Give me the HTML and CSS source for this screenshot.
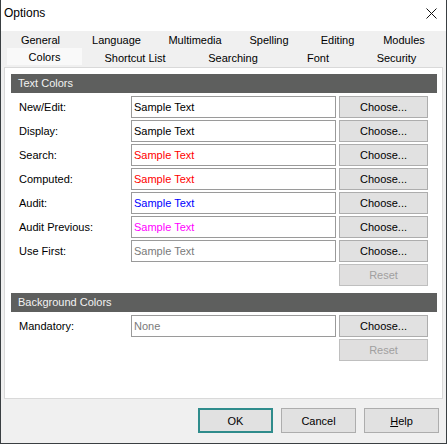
FILE: index.html
```html
<!DOCTYPE html>
<html>
<head>
<meta charset="utf-8">
<link rel="stylesheet" href="styles.css">
</head>
<body>
<div class="window">
  <div class="titlebar">
    <span class="title">Options</span>
    <svg class="close" width="11" height="11" viewBox="0 0 11 11"><path d="M0.5 0.5 L10.5 10.5 M10.5 0.5 L0.5 10.5" stroke="#111" stroke-width="1" fill="none"/></svg>
  </div>
  <div class="tabs">
    <div class="tabrow">
      <div class="tab t-general">General</div>
      <div class="tab t-language">Language</div>
      <div class="tab t-multimedia">Multimedia</div>
      <div class="tab t-spelling">Spelling</div>
      <div class="tab t-editing">Editing</div>
      <div class="tab t-modules">Modules</div>
    </div>
    <div class="tabrow">
      <div class="tab t-colors sel">Colors</div>
      <div class="tab t-shortcut">Shortcut List</div>
      <div class="tab t-searching">Searching</div>
      <div class="tab t-font">Font</div>
      <div class="tab t-security">Security</div>
    </div>
  </div>
  <div class="panel">
    <div class="section-head">Text Colors</div>
    <div class="rows">
      <div class="row"><span class="label">New/Edit:</span><div class="field c-black">Sample Text</div><button class="btn">Choose...</button></div>
      <div class="row"><span class="label">Display:</span><div class="field c-black">Sample Text</div><button class="btn">Choose...</button></div>
      <div class="row"><span class="label">Search:</span><div class="field c-red">Sample Text</div><button class="btn">Choose...</button></div>
      <div class="row"><span class="label">Computed:</span><div class="field c-red">Sample Text</div><button class="btn">Choose...</button></div>
      <div class="row"><span class="label">Audit:</span><div class="field c-blue">Sample Text</div><button class="btn">Choose...</button></div>
      <div class="row"><span class="label">Audit Previous:</span><div class="field c-magenta">Sample Text</div><button class="btn">Choose...</button></div>
      <div class="row"><span class="label">Use First:</span><div class="field c-gray">Sample Text</div><button class="btn">Choose...</button></div>
      <div class="row"><span class="label"></span><div class="spacer"></div><button class="btn disabled">Reset</button></div>
    </div>
    <div class="section-head second">Background Colors</div>
    <div class="rows">
      <div class="row"><span class="label">Mandatory:</span><div class="field c-gray">None</div><button class="btn">Choose...</button></div>
      <div class="row"><span class="label"></span><div class="spacer"></div><button class="btn disabled">Reset</button></div>
    </div>
  </div>
  <div class="footer">
    <button class="dbtn default">OK</button>
    <button class="dbtn">Cancel</button>
    <button class="dbtn"><u>H</u>elp</button>
  </div>
</div>
</body>
</html>
```

FILE: styles.css
```css
html, body {
  margin: 0;
  padding: 0;
  background: #f0f0f0;
}
body {
  font-family: "Liberation Sans", Arial, sans-serif;
  font-size: 11px;
  color: #000;
}
.window {
  width: 445px;
  height: 443px;
  border-left: 1px solid #3a3f42;
  border-right: 1px solid #3a3f42;
  border-bottom: 1px solid #3a3f42;
  background: #f0f0f0;
  display: flex;
  flex-direction: column;
}
.titlebar {
  height: 31px;
  background: #fff;
  display: flex;
  justify-content: space-between;
  align-items: flex-start;
  padding: 0 9px 0 3px;
}
.title {
  font-size: 12px;
  line-height: 14px;
  padding-top: 6px;
  color: #000;
}
.close {
  margin-top: 8px;
}
.tabs {
  padding-left: 3px;
}
.tabrow {
  display: flex;
  height: 18px;
  align-items: flex-start;
}
.tab {
  height: 18px;
  line-height: 18px;
  text-align: center;
  white-space: nowrap;
}
.t-general { width: 73px; }
.t-language { width: 79px; }
.t-multimedia { width: 78px; }
.t-spelling { width: 70px; }
.t-editing { width: 67px; }
.t-modules { width: 66px; }
.t-colors { width: 75px; margin-left: 3px; margin-right: 2px; }
.t-shortcut { width: 102px; }
.t-searching { width: 94px; }
.t-font { width: 76px; }
.t-security { width: 81px; }
.tab.sel {
  background: #f9f9f9;
  margin-top: -1px;
  height: 17px;
}
.panel {
  margin-left: 3px;
  width: 437px;
  height: 330px;
  border: 1px solid #d9d9d9;
  background: #fff;
  padding: 6px 5px 0 6px;
  box-sizing: content-box;
}
.panel {
  width: 426px;
  height: 324px;
}
.section-head {
  height: 19px;
  line-height: 19px;
  background: #5e5f5e;
  color: #f2f2f2;
  padding-left: 7px;
}
.section-head.second {
  margin-top: 7px;
}
.rows {
  padding-left: 8px;
  padding-top: 3px;
  display: flex;
  flex-direction: column;
  gap: 2px;
}
.row {
  display: flex;
  align-items: center;
  height: 22px;
}
.label {
  width: 112px;
  flex: none;
}
.field {
  width: 203px;
  height: 20px;
  line-height: 20px;
  border: 1px solid #9a9a9a;
  padding-left: 2px;
  box-sizing: border-box;
  width: 205px;
  height: 22px;
  background: #fff;
  flex: none;
}
.spacer {
  width: 205px;
  flex: none;
}
.c-black { color: #000; }
.c-red { color: #ff0000; }
.c-blue { color: #0000ff; }
.c-magenta { color: #ff00ff; }
.c-gray { color: #7a7a7a; }
.btn {
  margin-left: 3px;
  width: 89px;
  height: 22px;
  box-sizing: border-box;
  border: 1px solid #adadad;
  background: #e1e1e1;
  font-family: "Liberation Sans", Arial, sans-serif;
  font-size: 11px;
  color: #000;
  padding: 0;
  flex: none;
}
.btn.disabled {
  color: #a0a0a0;
  background: #e0dfdf;
  border-color: #bfbfbf;
}
.footer {
  display: flex;
  justify-content: flex-end;
  gap: 8px;
  padding-right: 7px;
  margin-top: 9px;
}
.dbtn {
  width: 75px;
  height: 25px;
  box-sizing: border-box;
  border: 1px solid #adadad;
  background: #e1e1e1;
  font-family: "Liberation Sans", Arial, sans-serif;
  font-size: 11px;
  color: #000;
  padding: 0;
}
.dbtn.default {
  border: 2px solid #2f8c8c;
}
```
